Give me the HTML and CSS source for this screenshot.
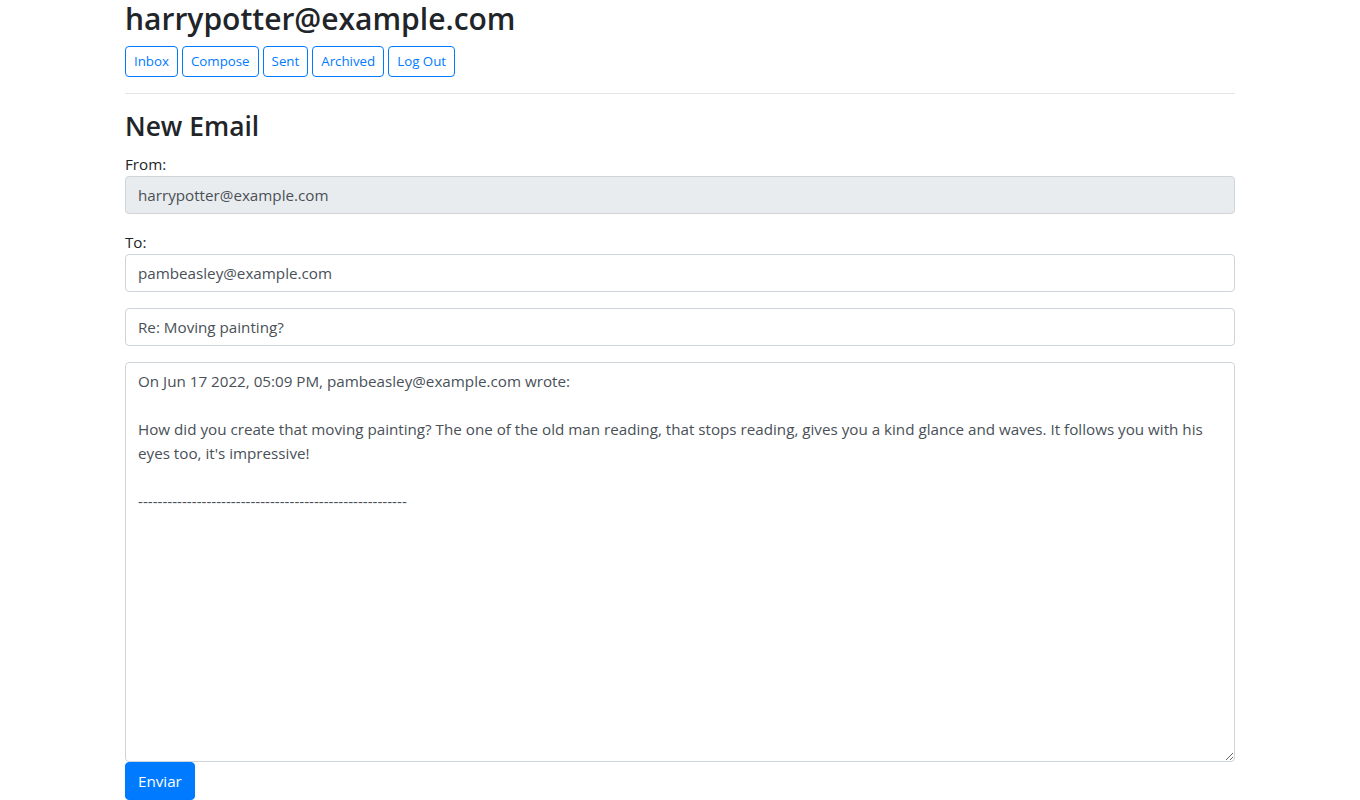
FILE: index.html
```html
<!DOCTYPE html>
<html lang="en">
<head>
<meta charset="utf-8">
<title>Mail</title>
<link rel="stylesheet" href="styles.css">
</head>
<body>
<div class="container">
  <h2 class="user">harrypotter@example.com</h2>
  <nav class="nav-buttons">
    <button class="btn btn-outline">Inbox</button>
    <button class="btn btn-outline">Compose</button>
    <button class="btn btn-outline">Sent</button>
    <button class="btn btn-outline">Archived</button>
    <button class="btn btn-outline">Log Out</button>
  </nav>
  <hr class="divider">
  <h3 class="title">New Email</h3>
  <form class="compose-form">
    <div class="form-group">
      From: <input disabled class="form-control" value="harrypotter@example.com">
    </div>
    <div class="form-group">
      To: <input class="form-control" value="pambeasley@example.com">
    </div>
    <div class="form-group">
      <input class="form-control" value="Re: Moving painting?" placeholder="Subject">
    </div>
    <textarea class="form-control body-area" spellcheck="false">On Jun 17 2022, 05:09 PM, pambeasley@example.com wrote:

How did you create that moving painting? The one of the old man reading, that stops reading, gives you a kind glance and waves. It follows you with his eyes too, it's impressive!

-------------------------------------------------------</textarea>
    <button type="submit" class="btn btn-primary">Enviar</button>
  </form>
</div>
</body>
</html>
```

FILE: styles.css
```css
*, *::before, *::after { box-sizing: border-box; }
html, body { margin: 0; padding: 0; }
body {
  font-family: "Segoe UI", "Open Sans", "Noto Sans", sans-serif;
  font-size: 15.2px;
  line-height: 24px;
  color: #212529;
  background: #fff;
}
.container {
  width: 1140px;
  margin: 0 auto;
  padding: 0 15px;
}
.user {
  font-size: 30px;
  font-weight: 600;
  line-height: 38.4px;
  margin: 0 0 8px;
}
.nav-buttons {
  display: flex;
  gap: 4px;
}
.btn {
  font-family: inherit;
  display: inline-block;
  border: 1px solid transparent;
  border-radius: 4px;
  cursor: pointer;
  background: transparent;
}
.btn-outline {
  font-size: 13.3px;
  line-height: 21px;
  padding: 4px 8px;
  color: #007bff;
  border-color: #007bff;
}
.divider {
  margin: 16px 0;
  border: 0;
  border-top: 1px solid rgba(0,0,0,.1);
}
.title {
  font-size: 26.4px;
  font-weight: 600;
  line-height: 33.6px;
  margin: 0 0 8px;
}
.compose-form { margin: 0; }
.form-group { margin-bottom: 16px; }
.form-control {
  display: block;
  width: 100%;
  height: 38px;
  padding: 6px 12px;
  font-family: inherit;
  font-size: 15.2px;
  line-height: 24px;
  color: #495057;
  background: #fff;
  border: 1px solid #ced4da;
  border-radius: 4px;
  margin: 0;
}
.form-control:disabled { background: #e9ecef; opacity: 1; }
.body-area {
  height: 400px;
  resize: vertical;
  overflow: auto;
}
.btn-primary {
  font-size: 15.2px;
  line-height: 24px;
  padding: 6px 12px;
  color: #fff;
  background: #007bff;
  border-color: #007bff;
}
```
